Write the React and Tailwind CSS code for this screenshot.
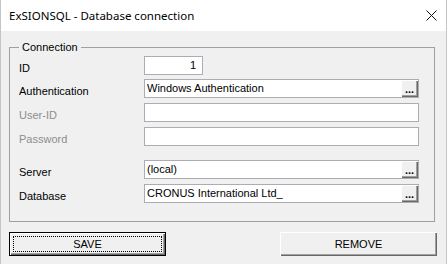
const ROWS = [
  { label: 'ID', value: '1', mt: 'mt-0', small: true },
  { label: 'Authentication', value: 'Windows Authentication', mt: 'mt-[4px]', browse: true },
  { label: 'User-ID', value: '', mt: 'mt-[5px]', disabled: true },
  { label: 'Password', value: '', mt: 'mt-[5px]', disabled: true },
  { label: 'Server', value: '(local)', mt: 'mt-[14px]', browse: true },
  { label: 'Database', value: 'CRONUS International Ltd_', mt: 'mt-[5px]', browse: true },
];

function BrowseButton() {
  return (
    <div className="w-[17px] h-[17px] bg-[#f0f0f0] flex items-end justify-center pb-[2px] shadow-[inset_1px_1px_#ffffff,inset_-1px_-1px_#696969,inset_-2px_-2px_#a0a0a0] text-[11px] font-bold leading-none text-black">
      ...
    </div>
  );
}

function Field({ row }) {
  return (
    <div className={`flex items-center h-[19px] ${row.mt}`}>
      <div className={`w-[125px] pt-[5px] ${row.disabled ? 'text-[#8d8d8d]' : 'text-black'}`}>{row.label}</div>
      <div
        className={`h-[19px] bg-white border border-[#abadb3] flex items-center ${
          row.small ? 'w-[59px] pr-[6px]' : 'w-[275px] pl-[2px]'
        }`}
      >
        <span className={`flex-1 truncate leading-[17px] text-black ${row.small ? 'text-right' : ''}`}>{row.value}</span>
        {row.browse && <BrowseButton />}
      </div>
    </div>
  );
}

export default function App() {
  return (
    <div
      className="w-[447px] h-[264px] bg-[#f0f0f0] border-l border-r border-[#c4c4c4] flex flex-col text-[11px]"
      style={{ fontFamily: '"Liberation Sans", Arial, sans-serif' }}
    >
      {/* Title bar */}
      <div className="h-[31px] bg-white flex items-center justify-between pl-[8px] pr-[9px] shrink-0">
        <span className="text-[11.5px] text-black" style={{ fontFamily: '"Noto Sans", sans-serif' }}>
          ExSIONSQL - Database connection
        </span>
        <svg width="11" height="11" viewBox="0 0 11 11">
          <path d="M0.5 0.5 L10.5 10.5 M10.5 0.5 L0.5 10.5" stroke="#111" strokeWidth="1" />
        </svg>
      </div>

      {/* Body */}
      <div className="flex-1 pt-[9px] pl-[8px] pr-[9px]">
        <fieldset className="border border-[#a0a0a0] mr-[3px] pl-[9px] pr-[15px] pt-[2px] pb-[18px]">
          <legend className="px-[3px] leading-[14px] text-black">Connection</legend>
          {ROWS.map(r => (
            <Field key={r.label} row={r} />
          ))}
        </fieldset>

        <div className="flex justify-between mt-[10px]">
          <button className="w-[157px] h-[24px] border border-black bg-[#f0f0f0] p-[3px] shadow-[inset_1px_1px_#ffffff,inset_-1px_-1px_#696969,inset_-2px_-2px_#a0a0a0]">
            <div className="w-full h-full border border-dotted border-black flex items-center justify-center text-black">
              SAVE
            </div>
          </button>
          <button className="w-[157px] h-[24px] bg-[#f0f0f0] flex items-center justify-center text-black shadow-[inset_1px_1px_#ffffff,inset_-1px_-1px_#696969,inset_-2px_-2px_#a0a0a0]">
            REMOVE
          </button>
        </div>
      </div>
    </div>
  );
}
